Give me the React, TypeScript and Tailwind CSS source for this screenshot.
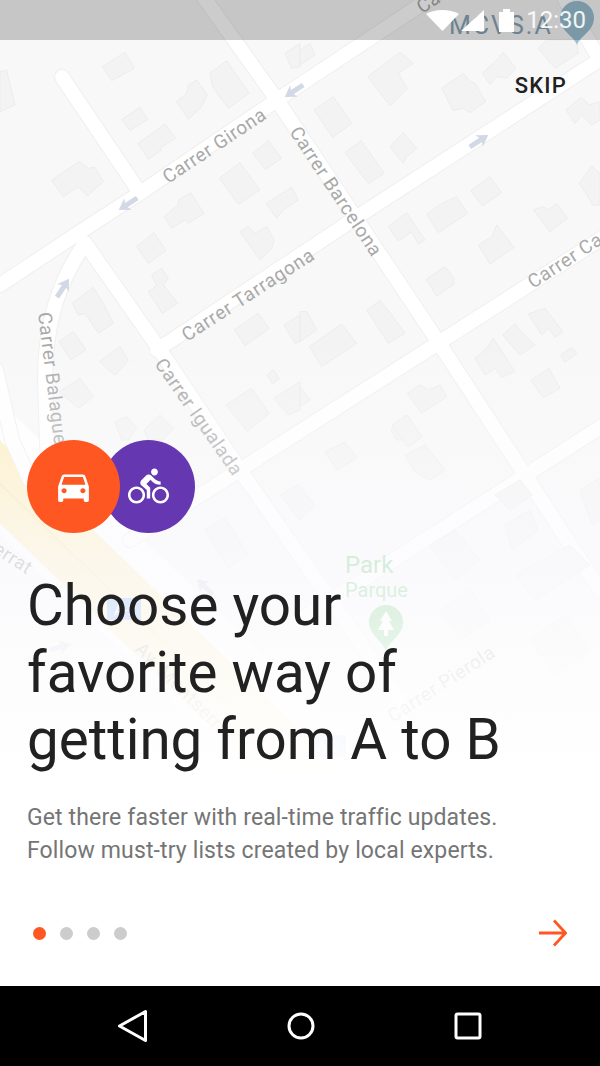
const zoomA = [
	"307,80 375,37 403,85 335,122",
	"0,95 20,90 45,195 0,215",
	"630,100 680,62 747,160 685,205 640,145",
	"530,185 560,160 565,135 590,120 622,165 605,200 565,238",
	"365,238 420,202 443,238 390,272",
	"414,310 495,252 527,295 480,325 485,330 445,358",
	"155,420 237,365 265,385 285,382 310,425 262,468 235,440 190,470",
	"658,415 720,368 780,450 715,493",
	"758,340 805,302 845,355 797,388",
	"798,490 875,442 895,480 850,510 830,535",
	"492,530 535,495 535,480 572,458 612,520 565,550 555,540 515,565",
	"410,620 462,578 498,632 445,670",
	"720,575 745,560 765,580 800,560 823,600 815,625 780,660",
	"455,705 485,685 505,715 490,735 533,790 487,820 445,755 470,738",
	"217,790 280,742 310,790 340,850 295,880 255,820 235,825",
	"178,905 220,875 258,930 212,960",
	"298,965 360,920 385,962 345,1005",
	"178,1055 240,1015 280,1070 235,1105",
	"703,870 775,820 808,865 735,917",
	"852,855 900,825 900,905 885,910",
	"800,1005 820,990 838,1015 818,1032",
	"678,1095 755,1045 808,1120 742,1175",
	"822,1075 900,1025 900,1110 865,1125",
	"345,1145 380,1130 410,1165 385,1200 365,1200",
	"432,1170 480,1125 520,1165 490,1200 445,1200",
	"855,40 900,10 900,80 875,85",
];

const zoomB = [
	"0,30 30,10 45,45 0,75",
	"203,110 300,37 340,70 295,100 322,145 270,197",
	"425,145 490,100 510,125 525,130 557,185 510,218 490,205 460,212",
	"547,100 590,60 610,38 648,85 620,115 592,110 570,133",
	"715,25 740,0 830,0 835,40 765,85",
	"42,210 100,170 155,250 98,292",
	"135,338 183,302 253,400 205,430",
	"270,320 310,278 350,325 320,350 310,370",
	"265,560 320,518 375,600 355,612 335,575 295,603",
	"380,522 430,488 470,470 503,520 415,578",
	"512,452 570,410 605,458 548,498",
	"535,615 575,590 590,555 642,622 570,672",
	"700,510 730,500 745,510 770,490 802,535 750,575",
	"838,430 875,378 900,400 900,495 880,497 855,455",
	"798,210 845,172 868,195 900,185 900,240 875,255 845,225 825,250",
	"378,718 435,680 462,715 460,735 410,768",
	"200,810 240,782 260,805 315,880 265,910",
	"0,815 20,815 50,870 0,905",
	"28,920 125,852 170,910 65,980",
	"525,955 560,925 580,895 645,995 605,1012 585,985 555,1005",
	"608,885 645,852 668,880 705,915 660,945",
	"685,822 735,805 788,875 765,892 745,865 725,885",
	"782,945 815,922 830,940 795,967",
	"692,1020 748,985 780,1045 730,1073",
	"322,1060 360,1035 385,1050 420,1035 440,1070 365,1120",
	"272,1170 325,1130 365,1190 340,1200 290,1200",
	"0,1040 30,1080 0,1100",
];

const lowerBlocks = [
	"392,425 407,415 422,437 408,447",
	"405,455 425,445 445,470 430,480 415,472",
	"325,452 345,442 357,458 337,470",
	"280,495 298,485 315,505 300,520",
	"505,525 530,510 538,530 512,550",
	"495,495 520,480 532,495 510,510",
	"515,575 570,545 590,565 535,600",
	"205,530 225,518 248,555 228,568",
	"440,610 470,590 490,620 460,640",
	"530,640 565,615 590,650 555,675",
	"430,545 455,530 480,560 455,580",
	"580,490 600,478 600,520 592,525",
];

const roads = [
	"M0,285 L80,232 L140,193 L277,100 L440,-8",
	"M157,350 L357,217 L610,53",
	"M130,540 L443,340 L610,233",
	"M300,620 L610,421",
	"M200,-8 L277,100 L437,340 L600,590",
	"M62,77 L138,190",
	"M85,243 L160,350 L240,470 L400,700",
	"M85,243 C60,280 45,320 45,380 L48,470",
	"M565,0 L600,60",
	"M-4,370 L12,440 L30,480",
];

const roadArrows = [
	{ x: 128, y: 204, r: 147 },
	{ x: 294, y: 91, r: 147 },
	{ x: 479, y: 141, r: -33 },
	{ x: 63, y: 288, r: -57 },
	{ x: 205, y: 587, r: 225 },
	{ x: 60, y: 647, r: -15 },
];

const streetNames = [
	{ name: "Carrer Girona", x: 168, y: 184, r: -33.5, ls: 0.6 },
	{ name: "Carrer Barcelona", x: 289, y: 132, r: 56.5, ls: 0.6 },
	{ name: "Carrer Tarragona", x: 187, y: 342, r: -33, ls: 0.75 },
	{ name: "Carrer Igualada", x: 154, y: 364, r: 55, ls: 0.6 },
	{ name: "Carrer Balaguer", x: 38, y: 313, r: 83, ls: 0.6 },
	{ name: "Carrer Ca", x: 533, y: 289, r: -33, ls: 0.6 },
	{ name: "Ca", x: 422, y: 14, r: -33, ls: 0.6 },
	{ name: "Carrer Pierola", x: 393, y: 723, r: -33, ls: 0.6 },
	{ name: "Av. Montserrat", x: 134, y: 650, r: 45, ls: 0.6 },
];

// faded street map behind the whole screen
const MapBackground = () => (
	<div className="absolute inset-x-0 top-0 h-[986px] overflow-hidden bg-[#f8f8f8]">
		<svg width="600" height="986" viewBox="0 0 600 986" className="block">
			<g strokeLinecap="round" strokeLinejoin="round" fill="none">
				<path d="M-60,410 L340,796" stroke="#ffffff" strokeWidth="96" />
				<path d="M-60,424 L340,810" stroke="#fdeebf" strokeWidth="60" strokeLinecap="butt" />
				<path d="M-60,426 L340,812" stroke="#f9e2a4" strokeWidth="1.500" />
				{roads.map((d) => (
					<path d={d} key={`c${d}`} stroke="#efefef" strokeWidth="16" />
				))}
				{roads.map((d) => (
					<path d={d} key={d} stroke="#ffffff" strokeWidth="14" />
				))}
			</g>
			<g fill="#f3f3f3" stroke="#ececec" strokeWidth="3" transform="translate(0 40) scale(0.3333)">
				{zoomA.map((points) => (
					<polygon points={points} key={points} />
				))}
			</g>
			<g fill="#f3f3f3" stroke="#ececec" strokeWidth="3" transform="translate(300 40) scale(0.3333)">
				{zoomB.map((points) => (
					<polygon points={points} key={points} />
				))}
			</g>
			<g fill="#f3f3f3" stroke="#ececec">
				{lowerBlocks.map((points) => (
					<polygon points={points} key={points} />
				))}
			</g>
			{roadArrows.map((a) => (
				<polygon
					key={`${a.x}-${a.y}`}
					points="-11,-2.5 2,-2.5 0,-7 11,0 0,7 2,2.5 -11,2.5"
					fill="#d3d8e6"
					transform={`translate(${a.x} ${a.y}) rotate(${a.r})`}
				/>
			))}
			<g fontFamily="Roboto, sans-serif" fontSize="19" fill="#a9a9a9">
				{streetNames.map((s) => (
					<text key={s.name} x={s.x} y={s.y} transform={`rotate(${s.r} ${s.x} ${s.y})`} letterSpacing={s.ls}>
						{s.name}
					</text>
				))}
				<text x="-8" y="552" transform="rotate(33 -8 552)" letterSpacing="0.6" fill="#9a9a9a">
					errat
				</text>
			</g>
			<text x="449" y="34" fontFamily="Roboto, sans-serif" fontSize="25" letterSpacing="2" fill="#88a3b5">
				MCVS.A
			</text>
			<path d="M577 45 C574 36 560 31 560 18 A17 17 0 0 1 594 18 C594 31 580 36 577 45 Z" fill="#9abfd0" />
			<rect x="107" y="598" width="34" height="22" fill="#82b1f0" />
			<text x="114" y="615" fontFamily="Roboto, sans-serif" fontSize="15" fill="#ffffff">A-2</text>
			<rect x="310" y="735" width="36" height="22" fill="#82b1f0" />
			<text x="317" y="752" fontFamily="Roboto, sans-serif" fontSize="15" fill="#ffffff">A-2</text>
			<g fontFamily="Roboto, sans-serif" fontSize="24" fill="#7fcc87">
				<text x="345" y="573">Park</text>
				<text x="345" y="597" fontSize="20">Parque</text>
			</g>
			<path d="M386 651 C382 640 369 635 369 622 A16.500 16.500 0 0 1 403 622 C403 635 390 640 386 651 Z" fill="#7fcc87" />
			<path d="M386 611 L392 621 L389 621 L394 630 L388 630 L388 636 L384 636 L384 630 L378 630 L383 621 L380 621 Z" fill="#ffffff" />
		</svg>
		<div className="absolute inset-x-0 top-[340px] h-[440px] bg-linear-to-b from-[#fbfbfe]/0 via-[#fbfbfe]/70 to-white"></div>
		<div className="absolute inset-x-0 top-[780px] bottom-0 bg-white"></div>
	</div>
);

const StatusBar = () => (
	<div className="relative flex h-10 shrink-0 items-center justify-end bg-black/20 pr-[14px]">
		<svg width="33" height="21" viewBox="0 0 33 21" className="mr-[2px] mt-[1px]">
			<path d="M0 4 C9 -1.300 24 -1.300 33 4 L16.500 21 Z" fill="#ffffff" />
		</svg>
		<svg width="23" height="21" viewBox="0 0 23 21" className="mt-[1px]">
			<path d="M23 0 V21 H0 Z" fill="#ffffff" />
		</svg>
		<svg width="15" height="23" viewBox="0 0 15 23" className="ml-[15px]">
			<path d="M0 3 H4 V0 H11 V3 H15 V23 H0 Z" fill="#ffffff" />
		</svg>
		<span className="ml-[12px] font-['Roboto',sans-serif] text-[24px] leading-none text-white/90">12:30</span>
	</div>
);

const NavBar = () => (
	<div className="relative flex h-20 shrink-0 items-center bg-black">
		<div className="flex w-full items-center justify-between pl-[117px] pr-[118px]">
			<svg width="31" height="34" viewBox="0 0 31 34">
				<path d="M28.500 2.500 V31.500 L2.500 17 Z" fill="none" stroke="#ffffff" strokeWidth="3" strokeLinejoin="round" />
			</svg>
			<svg width="28" height="28" viewBox="0 0 28 28" className="-ml-[1px]">
				<circle cx="14" cy="14" r="12" fill="none" stroke="#ffffff" strokeWidth="3" />
			</svg>
			<svg width="28" height="28" viewBox="0 0 28 28">
				<rect x="2" y="2" width="24" height="24" rx="1.500" fill="none" stroke="#ffffff" strokeWidth="3" />
			</svg>
		</div>
	</div>
);

const App = () => {
	return (
		<div className="relative flex h-[1066px] w-[600px] flex-col overflow-hidden bg-white font-['Roboto',sans-serif]">
			<MapBackground />
			<StatusBar />
			<div className="relative flex flex-1 flex-col">
				<div className="flex justify-end pr-[33px] pt-[33px]">
					<span className="text-[22px] font-medium leading-[26px] tracking-[1.2px] text-[#212121]">SKIP</span>
				</div>
				<div className="mt-[341px] flex pl-[27px]">
					<div className="z-10 flex size-[93px] items-center justify-center rounded-full bg-[#ff5722]">
						<svg width="41" height="41" viewBox="0 0 24 24" fill="#ffffff">
							<path d="M18.92 6.010C18.720 5.420 18.160 5 17.500 5h-11c-.66 0-1.210.42-1.420 1.010L3 12v8c0 .55.45 1 1 1h1c.55 0 1-.45 1-1v-1h12v1c0 .55.45 1 1 1h1c.55 0 1-.45 1-1v-8l-2.080-5.990zM6.500 16c-.83 0-1.500-.67-1.500-1.500S5.670 13 6.500 13s1.500.67 1.500 1.500S7.330 16 6.500 16zm11 0c-.83 0-1.500-.67-1.500-1.500s.67-1.500 1.500-1.500 1.500.67 1.500 1.500-.67 1.500-1.500 1.500zM5 11l1.500-4.500h11L19 11H5z" />
						</svg>
					</div>
					<div className="-ml-[18px] flex size-[93px] items-center justify-center rounded-full bg-[#6538b2]">
						<svg width="41" height="41" viewBox="0 0 24 24" fill="#ffffff">
							<path d="M15.500 5.500c1.100 0 2-.9 2-2s-.9-2-2-2-2 .9-2 2 .9 2 2 2zM5 12c-2.800 0-5 2.200-5 5s2.200 5 5 5 5-2.200 5-5-2.200-5-5-5zm0 8.500c-1.900 0-3.500-1.600-3.500-3.500s1.600-3.500 3.500-3.500 3.500 1.600 3.500 3.500-1.600 3.500-3.500 3.500zm5.800-10l2.400-2.400.8.8c1.300 1.300 3 2.100 5.100 2.100V9c-1.500 0-2.700-.6-3.600-1.500l-1.900-1.900c-.5-.4-1-.6-1.600-.6s-1.100.2-1.400.6L7.800 8.400c-.4.4-.6.9-.6 1.400 0 .6.2 1.100.6 1.400L11 14v5h2v-6.200l-2.200-2.300zM19 12c-2.800 0-5 2.200-5 5s2.200 5 5 5 5-2.200 5-5-2.200-5-5-5zm0 8.500c-1.900 0-3.500-1.600-3.500-3.500s1.600-3.500 3.500-3.500 3.500 1.600 3.500 3.500-1.600 3.500-3.500 3.500z" />
						</svg>
					</div>
				</div>
				<h1 className="mt-[40px] pl-[27px] text-[56.5px] font-normal leading-[67px] text-[#212121]">
					Choose your
					<br />
					favorite way of
					<br />
					getting from A to B
				</h1>
				<p className="mt-[27px] pl-[27px] text-[23px] leading-[33px] tracking-[0.13px] text-[#757575]">
					Get there faster with real-time traffic updates.
					<br />
					Follow must-try lists created by local experts.
				</p>
				<div className="mt-[52px] flex items-center justify-between pl-[33px] pr-[33px]">
					<div className="flex gap-[14px]">
						<div className="h-[13px] w-[13px] rounded-full bg-[#ff5722]"></div>
						<div className="h-[13px] w-[13px] rounded-full bg-[#cccccc]"></div>
						<div className="h-[13px] w-[13px] rounded-full bg-[#cccccc]"></div>
						<div className="h-[13px] w-[13px] rounded-full bg-[#cccccc]"></div>
					</div>
					<svg width="28" height="28" viewBox="0 0 28 28" fill="none" stroke="#ff5722" strokeWidth="2.800">
						<path d="M0 14 H26 M15 1.500 L26.500 14 L15 26.500" />
					</svg>
				</div>
			</div>
			<NavBar />
		</div>
	);
};

export default App;
